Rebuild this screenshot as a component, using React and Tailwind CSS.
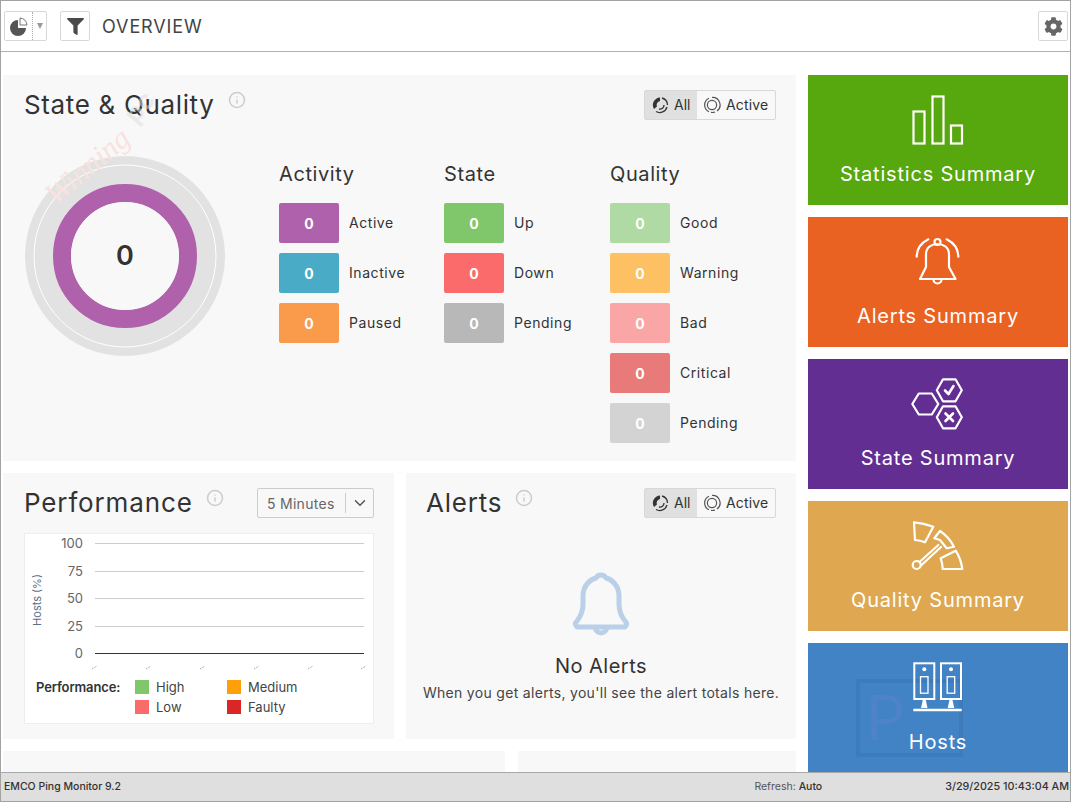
import { ChevronDown, Info } from "lucide-react";
import { FaCog, FaFilter } from "react-icons/fa";

const activity = [
  { label: "Active", color: "bg-[#b061ab]" },
  { label: "Inactive", color: "bg-[#4aabc6]" },
  { label: "Paused", color: "bg-[#fa9a4b]" },
];
const state = [
  { label: "Up", color: "bg-[#80c76c]" },
  { label: "Down", color: "bg-[#fb6b6b]" },
  { label: "Pending", color: "bg-[#b8b8b8]" },
];
const quality = [
  { label: "Good", color: "bg-[#afdaa3]" },
  { label: "Warning", color: "bg-[#fdc164]" },
  { label: "Bad", color: "bg-[#fba6a6]" },
  { label: "Critical", color: "bg-[#e87a7a]" },
  { label: "Pending", color: "bg-[#d3d3d3]" },
];

function PieIcon() {
  return (
    <svg width="22" height="22" viewBox="0 0 22 22">
      <path d="M10 5 A8 8 0 1 0 18 13 L10 13 Z" fill="#555" />
      <path d="M12 3 A8 8 0 0 1 19 10 L12 10 Z" fill="#fff" stroke="#777" strokeWidth="1" />
    </svg>
  );
}

function AllIcon() {
  return (
    <svg width="18" height="18" viewBox="0 0 18 18" fill="none">
      <path d="M9 1.5 A7.5 7.5 0 0 0 3 13 L6 10.5 A4 4 0 0 1 9 5 Z" fill="#333" />
      <path d="M11 2 A7.5 7.5 0 0 1 16.5 9" stroke="#333" strokeWidth="1.3" />
      <path d="M16 11 A7.5 7.5 0 0 1 5 15.5" stroke="#333" strokeWidth="1.3" />
      <path d="M13 9 A4 4 0 0 1 8 13" stroke="#333" strokeWidth="1.3" />
    </svg>
  );
}

function ActiveIcon() {
  return (
    <svg width="18" height="18" viewBox="0 0 18 18" fill="none" stroke="#555" strokeWidth="1.2">
      <path d="M6 2.2 A7.5 7.5 0 0 0 6 15.8" />
      <path d="M9 1.5 A7.5 7.5 0 0 1 14 15" />
      <path d="M12 16 A7.5 7.5 0 0 1 8 16.4" />
      <circle cx="9" cy="9" r="4.6" />
    </svg>
  );
}

function Toggle() {
  return (
    <div className="flex h-[30px] w-[132px] border border-[#d8d8d8] rounded-[2px] text-[14px] text-[#333]">
      <div className="flex items-center gap-[5px] pl-[6px] w-[52px] bg-[#e0e0e0]">
        <AllIcon />
        <span className="pb-[2px]">All</span>
      </div>
      <div className="flex items-center gap-[5px] pl-[6px] flex-1">
        <ActiveIcon />
        <span className="pb-[2px] tracking-[0.01em]">Active</span>
      </div>
    </div>
  );
}

function Tile({ label, color }) {
  return (
    <div className="flex items-center gap-[10px] h-[40px]">
      <div className={`w-[60px] h-[40px] rounded-[2px] flex items-center justify-center text-white font-bold text-[14px] ${color}`}>
        0
      </div>
      <span className="pb-[2px] text-[14px] text-[#333] tracking-[0.04em]">{label}</span>
    </div>
  );
}

function TileColumn({ title, items, width }) {
  return (
    <div className={width}>
      <div className="text-[20px] leading-[24px] text-[#333] tracking-[0.03em] mb-[17px]">{title}</div>
      <div className="flex flex-col gap-[10px]">
        {items.map((item) => (
          <Tile key={item.label} {...item} />
        ))}
      </div>
    </div>
  );
}

function Donut() {
  return (
    <div className="relative w-[200px] h-[200px]">
      <svg width="200" height="200" viewBox="0 0 200 200">
        <circle cx="100" cy="100" r="100" fill="#e2e2e2" />
        <circle cx="100" cy="100" r="91" fill="none" stroke="#fff" strokeWidth="1" />
        <circle cx="100" cy="100" r="63" fill="none" stroke="#b061ab" strokeWidth="18" />
        <circle cx="100" cy="100" r="54" fill="#f8f8f8" />
      </svg>
      <div className="absolute inset-0 flex items-center justify-center text-[27px] font-semibold text-[#333]">0</div>
    </div>
  );
}

function PerfChart() {
  const lines = [
    { y: 9, t: "100" },
    { y: 37, t: "75" },
    { y: 64, t: "50" },
    { y: 92, t: "25" },
    { y: 119, t: "0" },
  ];
  const ticks = [70, 124, 178, 232, 286, 339];
  return (
    <svg width="348" height="140" viewBox="0 0 348 140" className="block">
      {lines.map((l) => (
        <g key={l.t}>
          <line x1="70" x2="339" y1={l.y + 0.5} y2={l.y + 0.5} stroke={l.t === "0" ? "#333" : "#ccc"} />
          <text x="58" y={l.y + 5} textAnchor="end" fontSize="13" fill="#666">{l.t}</text>
        </g>
      ))}
      <text transform="translate(16 66) rotate(-90)" textAnchor="middle" fontSize="11" fill="#5b6f85">Hosts (%)</text>
      {ticks.map((x) => (
        <line key={x} x1={x - 3} y1="135" x2={x + 2} y2="132" stroke="#7a9a9a" strokeWidth="1" strokeDasharray="1 1" />
      ))}
    </svg>
  );
}

function Legend({ color, label, width }) {
  return (
    <div className={`flex items-center gap-[7px] ${width}`}>
      <span className={`w-[14px] h-[14px] ${color}`} />
      <span>{label}</span>
    </div>
  );
}

function StatsIcon() {
  return (
    <svg width="60" height="60" viewBox="0 0 60 60" fill="none" stroke="#fff" strokeWidth="2.2">
      <rect x="5.5" y="21.5" width="11" height="32" />
      <rect x="24.5" y="6.5" width="11" height="47" />
      <rect x="43" y="35.5" width="11" height="18" />
    </svg>
  );
}

function BellIcon() {
  return (
    <svg width="60" height="60" viewBox="0 0 60 60" fill="none" stroke="#fff" strokeWidth="2.2" strokeLinejoin="round" strokeLinecap="round">
      <circle cx="29.5" cy="10" r="3" />
      <path d="M12 47 L18 35 V22 C18 15 24 12 29.5 12 C35 12 41 15 41 22 V35 L47.5 47 Z" />
      <path d="M25.5 47.5 A4 4 0 1 0 33.5 47.5" />
      <path d="M8.7 24.7 C8.7 17 13 11 20.3 7.3" />
      <path d="M50.3 24.7 C50.3 17 46 11 38.7 7.3" />
    </svg>
  );
}

function HexIcon() {
  return (
    <svg width="60" height="60" viewBox="0 0 60 60" fill="none" stroke="#fff" strokeWidth="2.2" strokeLinejoin="round" strokeLinecap="round">
      <polygon points="4.3,30 10.8,19.5 23.8,19.5 30.3,30 23.8,40.5 10.8,40.5" />
      <polygon points="28.8,16.3 35,5.3 47.5,5.3 53.8,16.3 47.5,27.3 35,27.3" />
      <polygon points="28.8,43.3 35,32.3 47.5,32.3 53.8,43.3 47.5,54.3 35,54.3" />
      <path d="M37 16.5 L40.5 20 L45.5 12" strokeWidth="2.6" />
      <path d="M37.5 39.5 L45 47 M45 39.5 L37.5 47" strokeWidth="2.6" />
    </svg>
  );
}

function GaugeIcon() {
  return (
    <svg width="60" height="60" viewBox="0 0 60 60" fill="none" stroke="#fff" strokeWidth="2.2" strokeLinejoin="round" strokeLinecap="round">
      <path d="M6 6.3 Q16 7 25.3 10.7 L17 26.3 Q12 24.5 7 24 Z" />
      <path d="M32 15 Q41 21 46 30.7 L38.7 32.3 L32 24 L26.3 22.3 Z" />
      <path d="M32.7 42.3 L47.7 34.7 Q53 43 54.3 53 H34.7 Q34.5 47 32.7 42.3 Z" />
      <circle cx="8.7" cy="49" r="4" />
      <path d="M11.5 46 L30.3 29 M13 49.5 L33 31" />
    </svg>
  );
}

function ServersIcon() {
  return (
    <svg width="60" height="60" viewBox="0 0 60 60" fill="none" stroke="#fff" strokeWidth="2">
      <rect x="6.3" y="5.3" width="20" height="35.7" />
      <rect x="33" y="5.3" width="20" height="35.7" />
      <circle cx="16.3" cy="11.3" r="2" fill="#fff" stroke="none" />
      <circle cx="43" cy="11.3" r="2" fill="#fff" stroke="none" />
      <rect x="12.5" y="18.7" width="7.5" height="16.5" strokeWidth="1.3" />
      <rect x="39.2" y="18.7" width="7.5" height="16.5" strokeWidth="1.3" />
      <path d="M15 41 H17.6 L19.5 50 H13 Z" fill="#fff" stroke="none" />
      <path d="M41.7 41 H44.3 L46.2 50 H39.7 Z" fill="#fff" stroke="none" />
      <path d="M5.3 52 H53.7" strokeWidth="2.6" />
    </svg>
  );
}

function EmptyBell() {
  return (
    <svg width="58" height="68" viewBox="0 0 58 68" fill="none" stroke="#bad0e8" strokeWidth="5" strokeLinejoin="round">
      <path d="M5 55 C3 53 3 51 5 49 C9 44 11 40 11 32 V24 C11 13 19 7 24 6 C26 2 32 2 34 6 C39 7 47 13 47 24 V32 C47 40 49 44 53 49 C55 51 55 53 53 55 Z" />
      <path d="M23 55 C24 63 34 63 35 55" />
    </svg>
  );
}

function NavCard({ color, label, children, mark }) {
  return (
    <div className={`relative h-[130px] shrink-0 flex flex-col items-center pt-[15px] text-white ${color}`}>
      {mark}
      <div className="relative">{children}</div>
      <div className="relative mt-[12px] text-[20px] leading-[24px] tracking-[0.04em]">{label}</div>
    </div>
  );
}

export default function App() {
  return (
    <div className="relative w-[1071px] h-[802px] flex flex-col overflow-hidden bg-white border border-[#a3a3a3] font-['Inter','Liberation_Sans',sans-serif]">
      {/* toolbar */}
      <header className="h-[51px] shrink-0 flex items-center pl-[3px] pr-[2px] border-b border-[#b0b0b0]">
        <div className="flex items-center h-[30px] w-[43px] border border-[#d8d8d8] rounded-[2px]">
          <div className="w-[28px] flex justify-center border-r border-dotted border-[#aaa] h-full items-center">
            <PieIcon />
          </div>
          <span className="ml-[4px] w-0 h-0 border-x-[3.5px] border-x-transparent border-t-[6px] border-t-[#999]" />
        </div>
        <div className="ml-[13px] flex items-center justify-center h-[30px] w-[30px] border border-[#d8d8d8] rounded-[2px] text-[#4a4a4a]">
          <FaFilter size={17} />
        </div>
        <div className="ml-[12px] text-[18px] text-[#444] tracking-[0.05em]">OVERVIEW</div>
        <div className="ml-auto flex items-center justify-center h-[30px] w-[30px] border border-[#d8d8d8] rounded-[2px] text-[#666]">
          <FaCog size={19} />
        </div>
      </header>

      {/* content */}
      <main className="flex-1 min-h-0 overflow-hidden flex gap-[12px] pl-[2px] pt-[23px]">
        <div className="w-[793px] shrink-0 flex flex-col gap-[12px]">
          <section className="h-[386px] shrink-0 bg-[#f8f8f8] pl-[21px] pr-[20px] pt-[15px]">
            <div className="flex items-start">
              <h1 className="text-[26px] leading-[30px] text-[#333] tracking-[0.025em]">State &amp; Quality</h1>
              <Info size={18} className="ml-[13px] mt-[1px] text-[#ccc]" />
              <div className="ml-auto"><Toggle /></div>
            </div>
            <div className="flex mt-[35px]">
              <div className="w-[255px] pl-[1px] pt-[1px]">
                <Donut />
              </div>
              <div className="flex pt-[7px]">
                <TileColumn title="Activity" items={activity} width="w-[165px]" />
                <TileColumn title="State" items={state} width="w-[166px]" />
                <TileColumn title="Quality" items={quality} width="w-[160px]" />
              </div>
            </div>
          </section>

          <div className="flex gap-[12px] h-[266px] shrink-0">
            <section className="w-[391px] bg-[#f8f8f8] pl-[21px] pr-[20px] pt-[15px]">
              <div className="flex items-start">
                <h2 className="text-[26px] leading-[30px] text-[#333] tracking-[0.033em]">Performance</h2>
                <Info size={18} className="ml-[13px] mt-[1px] text-[#ccc]" />
                <div className="ml-auto flex items-center h-[30px] w-[117px] border border-[#ccc] rounded-[2px] text-[14px] text-[#666]">
                  <span className="pl-[9px] w-[87px] tracking-[0.02em]">5 Minutes</span>
                  <span className="h-[20px] border-l border-[#ccc]" />
                  <ChevronDown size={18} className="ml-[5px] text-[#555]" />
                </div>
              </div>
              <div className="mt-[15px] h-[191px] bg-white border border-[#eee]">
                <PerfChart />
                <div className="flex pl-[11px] pt-[6px] text-[13px] text-[#444]">
                  <div className="w-[99px] font-semibold leading-[14px] text-[#333] tracking-[-0.01em]">Performance:</div>
                  <div className="flex flex-wrap w-[184px] gap-y-[6px] leading-[14px]">
                    <Legend color="bg-[#80c76c]" label="High" width="w-[92px]" />
                    <Legend color="bg-[#ff9f0a]" label="Medium" width="w-[92px]" />
                    <Legend color="bg-[#fb6b6b]" label="Low" width="w-[92px]" />
                    <Legend color="bg-[#d92626]" label="Faulty" width="w-[92px]" />
                  </div>
                </div>
              </div>
            </section>

            <section className="flex-1 bg-[#f8f8f8] pl-[20px] pr-[20px] pt-[15px]">
              <div className="flex items-start">
                <h2 className="text-[26px] leading-[30px] text-[#333] tracking-[0.03em]">Alerts</h2>
                <Info size={18} className="ml-[13px] mt-[1px] text-[#ccc]" />
                <div className="ml-auto"><Toggle /></div>
              </div>
              <div className="flex flex-col items-center mt-[54px] -mx-[10px]">
                <EmptyBell />
                <div className="mt-[14px] text-[20px] leading-[24px] text-[#333] tracking-[0.025em]">No Alerts</div>
                <div className="mt-[6px] whitespace-nowrap text-[14px] leading-[18px] text-[#444] tracking-[0.022em]">When you get alerts, you'll see the alert totals here.</div>
              </div>
            </section>
          </div>

          <div className="flex gap-[13px] h-[100px] shrink-0">
            <section className="w-[502px] bg-[#f8f8f8]" />
            <section className="flex-1 bg-[#f8f8f8]" />
          </div>
        </div>

        <div className="w-[260px] shrink-0 flex flex-col gap-[12px]">
          <NavCard color="bg-[#57a70e]" label="Statistics Summary"><StatsIcon /></NavCard>
          <NavCard color="bg-[#e96222]" label="Alerts Summary"><BellIcon /></NavCard>
          <NavCard color="bg-[#632e91]" label="State Summary"><HexIcon /></NavCard>
          <NavCard color="bg-[#dfa74f]" label="Quality Summary"><GaugeIcon /></NavCard>
          <NavCard
            color="bg-[#4183c4]"
            label="Hosts"
            mark={
              <div className="absolute left-[48px] top-[36px] w-[107px] h-[78px] border-[4px] border-[#3d7bbb] text-[62px] leading-[70px] pl-[6px] text-[#4e82c9]">P</div>
            }
          >
            <ServersIcon />
          </NavCard>
        </div>
      </main>

      {/* status bar */}
      <footer className="h-[29px] shrink-0 flex items-center bg-[#dfdfdf] border-t border-[#a8a8a8] pl-[3px] pr-[1px] text-[10.5px] text-[#333]">
        <span className="font-medium">EMCO Ping Monitor 9.2</span>
        <span className="ml-auto text-[#555]">Refresh: <span className="font-medium text-[#333]">Auto</span></span>
        <span className="ml-[123px] font-medium text-[10.75px]">3/29/2025 10:43:04 AM</span>
      </footer>

      {/* watermarks */}
      <div className="absolute left-[36px] top-[142px] rotate-[-40deg] text-[30px] italic text-[#f9e2de] font-['Liberation_Serif',serif] pointer-events-none">Winning</div>
      <div className="absolute left-[122px] top-[86px] rotate-[-50deg] text-[26px] font-bold text-[#ddd]/50 pointer-events-none">pc</div>
    </div>
  );
}
